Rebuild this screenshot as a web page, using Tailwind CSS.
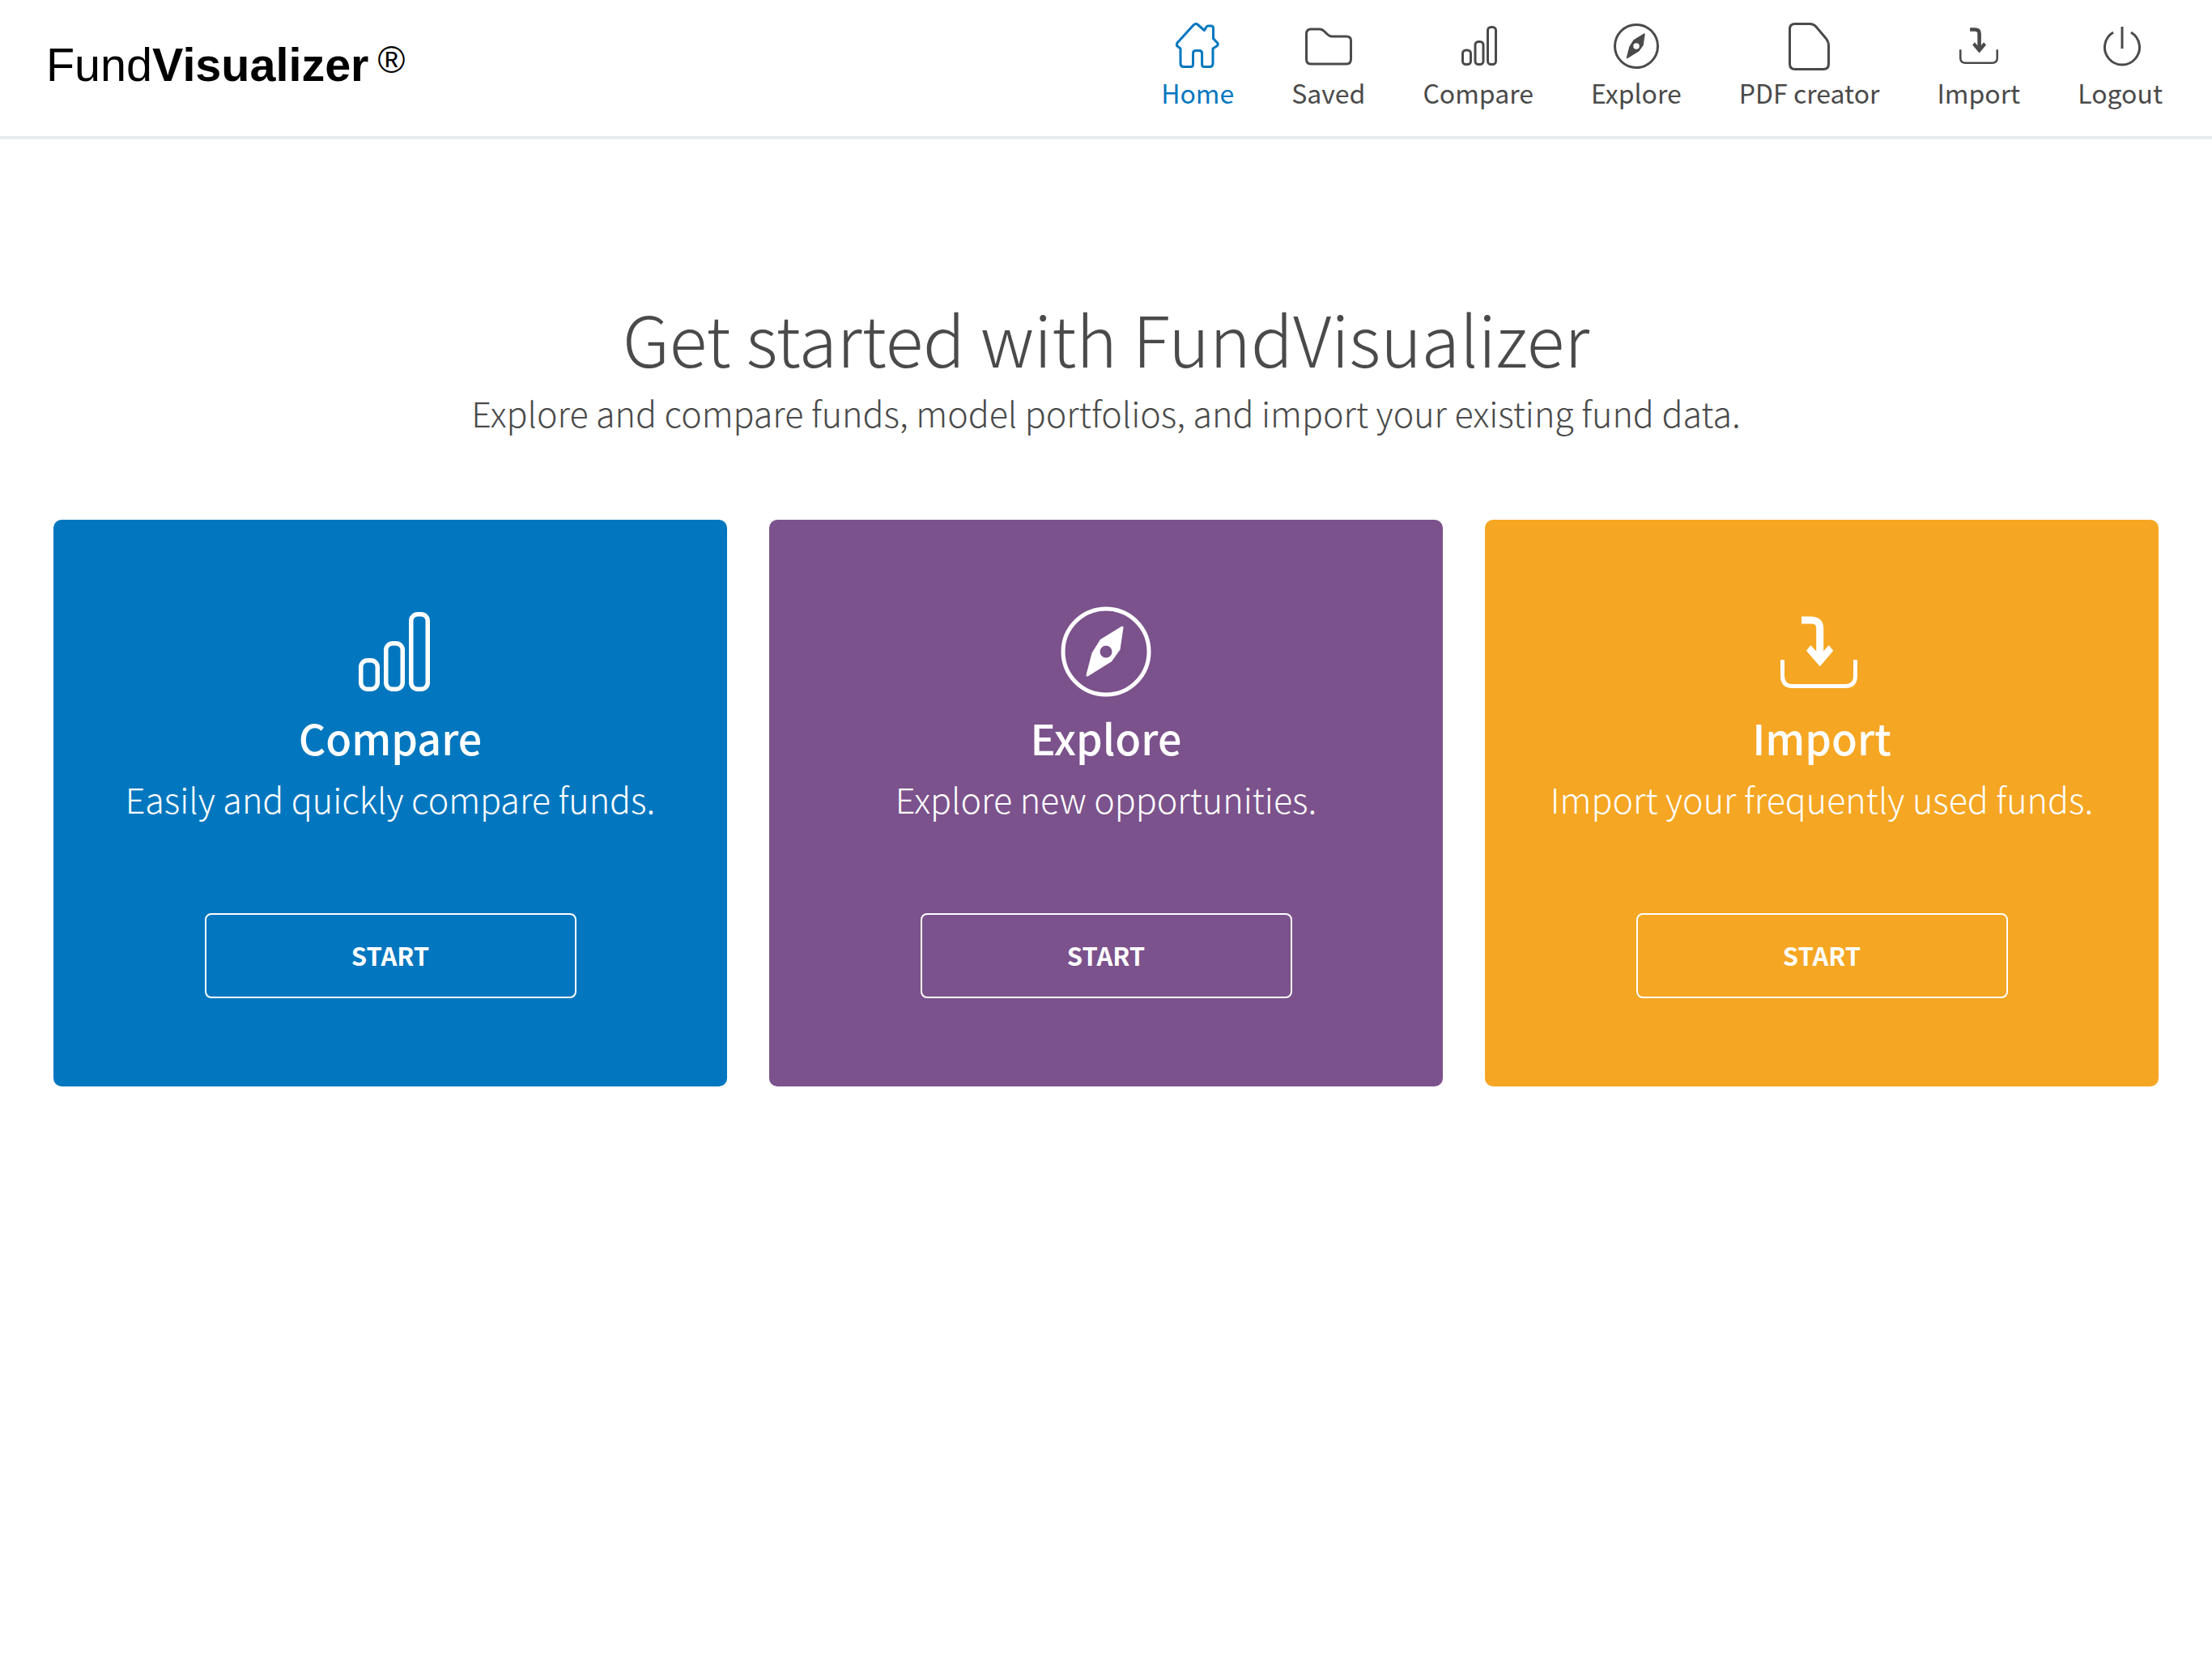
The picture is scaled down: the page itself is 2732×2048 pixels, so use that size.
<!DOCTYPE html>
<html lang="en">
<head>
    <meta charset="UTF-8">
    <title>FundVisualizer</title>
    <script src="https://cdn.jsdelivr.net/npm/@tailwindcss/browser@4"></script>
</head>
<body class="bg-white min-h-screen font-['Noto_Sans_CJK_SC','Noto_Sans',sans-serif] text-[#4a4a4a]">
    <!-- Header -->
    <header class="h-[172px] border-b-4 border-[#e8edf1] flex items-start justify-between pl-[57px] pr-[61px]">
        <div class="font-['Liberation_Sans',sans-serif] text-[57.5px] leading-none text-black mt-[52px] flex items-start">
            <span>Fund<b>Visualizer</b></span>
            <span class="text-[46px] leading-none ml-[11px] mt-[-1px]">®</span>
        </div>
        <nav class="flex gap-[71px] text-[32px] leading-[44px]">
            <a class="flex flex-col items-center text-[#0277bf]">
                <span class="h-[64px] mt-[28px] flex items-start">
                    <svg width="54" height="58" viewBox="0 0 54 58" fill="none" stroke="currentColor" stroke-width="3" stroke-linejoin="round">
                        <path d="M26.8 2 L35.5 9.5 L37.5 6 Q38.5 4 40 4 H44 Q46.5 4 46.5 7 V19.5 L52 25.5 Q52.5 27 51.5 28.5 L46 32 V50 Q46 54.5 42 54.5 H35.5 Q32.6 54.5 32.6 51.5 V38 Q32.6 34.5 29 34.5 H25 Q21.5 34.5 21.5 38 V51.5 Q21.5 54.5 18.5 54.5 H10 Q6 54.5 6 50 V32 L1.5 28.5 Q1 27 2 25 L22 3 Q24.5 0.5 26.8 2 Z"/>
                    </svg>
                </span>
                <span>Home</span>
            </a>
            <a class="flex flex-col items-center">
                <span class="h-[64px] mt-[28px] pt-[6px] flex items-start">
                    <svg width="58" height="47" viewBox="0 0 58 47" fill="none" stroke="currentColor" stroke-width="3" stroke-linejoin="round">
                        <path d="M1.5 8 Q1.5 2 7 2 H18 Q21 2 24 5 L27 8 Q30 11 33 11 H51 Q56.5 11 56.5 16 V39 Q56.5 45 51 45 H7 Q1.5 45 1.5 39 Z"/>
                    </svg>
                </span>
                <span>Saved</span>
            </a>
            <a class="flex flex-col items-center">
                <span class="h-[64px] mt-[28px] pt-[4px] pl-[4px] flex items-start">
                    <svg width="45" height="49" viewBox="0 0 90 98" fill="none" stroke="currentColor" stroke-width="6">
                        <rect x="3" y="60" width="20" height="35" rx="8"/>
                        <rect x="34" y="39" width="20" height="56" rx="8"/>
                        <rect x="65" y="3" width="20" height="92" rx="8"/>
                    </svg>
                </span>
                <span>Compare</span>
            </a>
            <a class="flex flex-col items-center">
                <span class="h-[64px] mt-[28px] pt-[1px] flex items-start">
                    <svg width="56" height="56" viewBox="0 0 112 112">
                        <circle cx="56" cy="56" r="53" fill="none" stroke="currentColor" stroke-width="6"/>
                        <path fill="currentColor" fill-rule="evenodd" stroke="currentColor" stroke-width="3" stroke-linejoin="round" d="M76 26 L50 42 L40 58 L33 85 L62 67 L72 53 Z M56 47 A9 9 0 1 0 56 65 A9 9 0 1 0 56 47 Z"/>
                    </svg>
                </span>
                <span>Explore</span>
            </a>
            <a class="flex flex-col items-center">
                <span class="h-[64px] mt-[28px] flex items-start">
                    <svg width="51" height="59" viewBox="0 0 51 59" fill="none" stroke="currentColor" stroke-width="3" stroke-linejoin="round">
                        <path d="M8 1.5 H26 Q31 1.5 34 5 L45 18 Q49.5 23 49.5 28 V51 Q49.5 57.5 43 57.5 H8 Q1.5 57.5 1.5 51 V8 Q1.5 1.5 8 1.5 Z"/>
                    </svg>
                </span>
                <span>PDF creator</span>
            </a>
            <a class="flex flex-col items-center">
                <span class="h-[64px] mt-[28px] pt-[6px] flex items-start">
                    <svg width="48" height="45" viewBox="0 0 95 89">
                        <path fill="none" stroke="currentColor" stroke-width="5" d="M2.5 54 V74 Q2.5 86.5 15 86.5 H80 Q92.5 86.5 92.5 74 V54"/>
                        <path fill="none" stroke="currentColor" stroke-width="9" d="M26 5 H38 Q48.7 5 48.7 15 V55"/>
                        <path fill="currentColor" d="M37.3 36 L32 42.7 L48.7 62.3 L65.3 42.7 L59.7 36 L48.7 48.3 Z"/>
                    </svg>
                </span>
                <span>Import</span>
            </a>
            <a class="flex flex-col items-center">
                <span class="h-[64px] mt-[28px] pt-[4px] pl-[4px] flex items-start">
                    <svg width="48" height="50" viewBox="0 0 48 50" fill="none" stroke="currentColor" stroke-width="3">
                        <path d="M13 8 A21.5 21.5 0 1 0 35 8"/>
                        <path d="M24 1 V28"/>
                    </svg>
                </span>
                <span>Logout</span>
            </a>
        </nav>
    </header>

    <main>
        <div class="text-center pt-[200px]">
            <h1 class="text-[86px] leading-[90px] font-light">Get started with FundVisualizer</h1>
            <p class="text-[43px] leading-[60px] font-light mt-[17px]">Explore and compare funds, model portfolios, and import your existing fund data.</p>
        </div>

        <section class="grid grid-cols-3 gap-[52px] px-[66px] mt-[103px] text-white text-center">
            <div class="h-[700px] bg-[#0277bf] rounded-[10px] flex flex-col items-center pt-[107px]">
                <div class="h-[112px] flex items-center ml-[12px]">
                    <svg width="90" height="98" viewBox="0 0 90 98" fill="none" stroke="white" stroke-width="5.5">
                        <rect x="2.75" y="59.75" width="20.5" height="35.5" rx="8"/>
                        <rect x="33.75" y="38.75" width="20.5" height="56.5" rx="8"/>
                        <rect x="64.75" y="2.75" width="20.5" height="92.5" rx="8"/>
                    </svg>
                </div>
                <h2 class="text-[52px] leading-[70px] font-medium mt-[15px]">Compare</h2>
                <p class="text-[43px] leading-[60px] font-light mt-[10px]">Easily and quickly compare funds.</p>
                <a class="w-[459px] h-[105px] mt-[112px] border-2 border-white rounded-[8px] flex items-center justify-center text-[31px] font-bold">START</a>
            </div>
            <div class="h-[700px] bg-[#7b528c] rounded-[10px] flex flex-col items-center pt-[107px]">
                <div class="h-[112px] flex items-center">
                    <svg width="112" height="112" viewBox="0 0 112 112">
                        <circle cx="56" cy="56" r="53" fill="none" stroke="white" stroke-width="5"/>
                        <path fill="white" fill-rule="evenodd" stroke="white" stroke-width="3" stroke-linejoin="round" d="M76 26 L50 42 L40 58 L33 85 L62 67 L72 53 Z M56 47 A9 9 0 1 0 56 65 A9 9 0 1 0 56 47 Z"/>
                    </svg>
                </div>
                <h2 class="text-[52px] leading-[70px] font-medium mt-[15px]">Explore</h2>
                <p class="text-[43px] leading-[60px] font-light mt-[10px]">Explore new opportunities.</p>
                <a class="w-[459px] h-[105px] mt-[112px] border-2 border-white rounded-[8px] flex items-center justify-center text-[31px] font-bold">START</a>
            </div>
            <div class="h-[700px] bg-[#f5a623] rounded-[10px] flex flex-col items-center pt-[107px]">
                <div class="h-[112px] flex items-center mr-[8px]">
                    <svg width="95" height="89" viewBox="0 0 95 89">
                        <path fill="none" stroke="white" stroke-width="5" d="M2.5 54 V74 Q2.5 86.5 15 86.5 H80 Q92.5 86.5 92.5 74 V54"/>
                        <path fill="none" stroke="white" stroke-width="9" d="M26 5 H38 Q48.7 5 48.7 15 V55"/>
                        <path fill="white" d="M37.3 36 L32 42.7 L48.7 62.3 L65.3 42.7 L59.7 36 L48.7 48.3 Z"/>
                    </svg>
                </div>
                <h2 class="text-[52px] leading-[70px] font-medium mt-[15px]">Import</h2>
                <p class="text-[43px] leading-[60px] font-light mt-[10px]">Import your frequently used funds.</p>
                <a class="w-[459px] h-[105px] mt-[112px] border-2 border-white rounded-[8px] flex items-center justify-center text-[31px] font-bold">START</a>
            </div>
        </section>
    </main>
</body>
</html>
